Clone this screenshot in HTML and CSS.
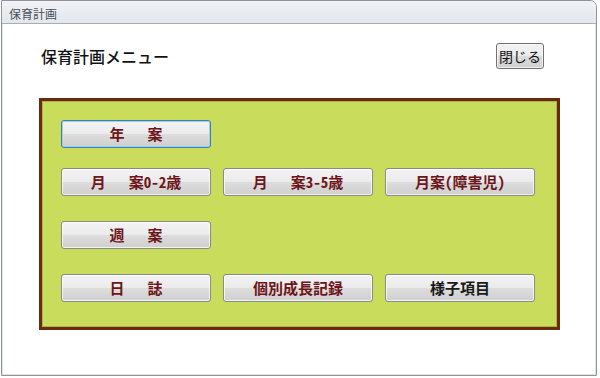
FILE: index.html
```html
<!DOCTYPE html>
<html lang="ja">
<head>
<meta charset="utf-8">
<title>保育計画</title>
<link rel="stylesheet" href="styles.css">
</head>
<body>
<div class="window">
  <div class="titlebar">保育計画</div>
  <div class="content">
    <div class="header">
      <h1 class="heading">保育計画メニュー</h1>
      <button class="close-btn">閉じる</button>
    </div>
    <div class="panel">
      <div class="row">
        <button class="menu-btn focused">年<span class="sp"></span>案</button>
      </div>
      <div class="rows">
        <div class="row">
          <button class="menu-btn">月<span class="sp"></span>案0-2歳</button>
          <button class="menu-btn">月<span class="sp"></span>案3-5歳</button>
          <button class="menu-btn">月案(障害児)</button>
        </div>
        <div class="row">
          <button class="menu-btn">週<span class="sp"></span>案</button>
        </div>
        <div class="row">
          <button class="menu-btn">日<span class="sp"></span>誌</button>
          <button class="menu-btn">個別成長記録</button>
          <button class="menu-btn black">様子項目</button>
        </div>
      </div>
    </div>
  </div>
</div>
</body>
</html>
```

FILE: styles.css
```css
html, body {
  margin: 0;
  padding: 0;
  background: #ffffff;
}
body {
  width: 600px;
  height: 378px;
  overflow: hidden;
  font-family: "Noto Sans CJK JP", "Noto Sans", sans-serif;
}
.window {
  box-sizing: border-box;
  margin: 0 0 0 1px;
  width: 596px;
  height: 376px;
  border: 1px solid #8e9399;
  border-radius: 0 7px 0 0;
  box-shadow: inset 1px 0 0 #dfe3e8, inset -1px 0 0 #dfe3e8, inset 0 -1px 0 #dfe3e8;
  background: #ffffff;
  overflow: hidden;
  display: flex;
  flex-direction: column;
}
.titlebar {
  height: 23px;
  flex: none;
  box-sizing: border-box;
  padding: 6px 0 0 7px;
  font-size: 12px;
  line-height: 14px;
  color: #4b4f55;
  background: linear-gradient(#f1f3f6, #e2e6ed);
  border-bottom: 1px solid #a7adb5;
}
.content {
  flex: 1;
  padding: 19px 52px 0 37px;
}
.header {
  display: flex;
  justify-content: space-between;
  align-items: center;
  height: 26px;
}
.heading {
  margin: 0;
  padding-left: 2px;
  font-size: 16px;
  font-weight: 500;
  line-height: 20px;
  color: #111111;
}
.close-btn {
  box-sizing: border-box;
  width: 48px;
  height: 26px;
  padding: 0;
  font-family: inherit;
  font-size: 14px;
  line-height: 16px;
  color: #111;
  border: 1px solid #707070;
  border-radius: 3px;
  background: linear-gradient(#f3f3f3 0%, #ebebeb 50%, #dddddd 50%, #cfcfcf 100%);
  box-shadow: inset 0 0 0 1px rgba(255, 255, 255, 0.7);
}
.panel {
  box-sizing: border-box;
  margin-top: 29px;
  width: 521px;
  height: 232px;
  padding: 19px 0 0 19px;
  background: #c9dc5b;
  border: 3px solid #6a2a0b;
  box-shadow: inset 0 0 0 1px #a7b84c;
}
.rows {
  display: flex;
  flex-direction: column;
  gap: 25px;
  margin-top: 20px;
}
.row {
  display: flex;
  gap: 12px;
}
.menu-btn {
  box-sizing: border-box;
  width: 150px;
  height: 28px;
  padding: 0;
  font-family: inherit;
  font-size: 15px;
  font-weight: 700;
  line-height: 18px;
  font-feature-settings: "hwid";
  color: #6e1519;
  border: 1px solid #8a8a8a;
  border-radius: 3px;
  background: linear-gradient(#f3f3f3 0%, #ebebeb 50%, #dddddd 50%, #cfcfcf 100%);
  box-shadow: inset 0 0 0 1px rgba(255, 255, 255, 0.75);
  white-space: nowrap;
}
.menu-btn.focused {
  border-color: #3c7fb1;
  box-shadow: inset 0 0 0 1px #9ed2f0;
}
.menu-btn.black {
  color: #1a1a1a;
}
.sp {
  display: inline-block;
  width: 23px;
}
```
